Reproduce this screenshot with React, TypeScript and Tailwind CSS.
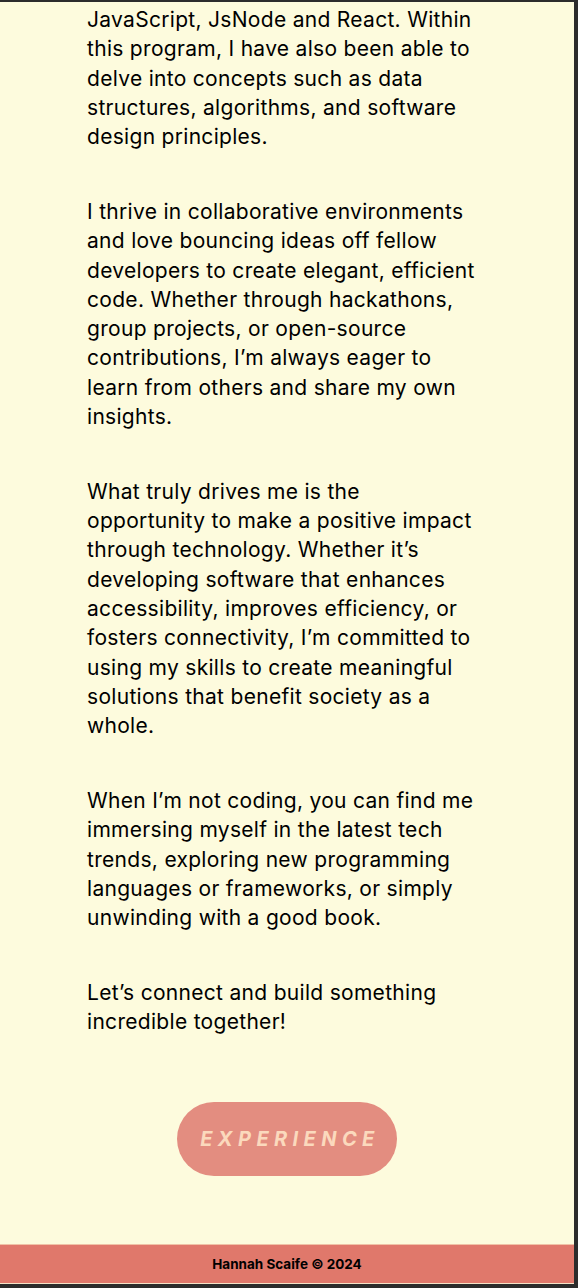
import React from "react";

const paras: string[][] = [
  [
    "JavaScript, JsNode and React. Within",
    "this program, I have also been able to",
    "delve into concepts such as data",
    "structures, algorithms, and software",
    "design principles.",
  ],
  [
    "I thrive in collaborative environments",
    "and love bouncing ideas off fellow",
    "developers to create elegant, efficient",
    "code. Whether through hackathons,",
    "group projects, or open-source",
    "contributions, I’m always eager to",
    "learn from others and share my own",
    "insights.",
  ],
  [
    "What truly drives me is the",
    "opportunity to make a positive impact",
    "through technology. Whether it’s",
    "developing software that enhances",
    "accessibility, improves efficiency, or",
    "fosters connectivity, I’m committed to",
    "using my skills to create meaningful",
    "solutions that benefit society as a",
    "whole.",
  ],
  [
    "When I’m not coding, you can find me",
    "immersing myself in the latest tech",
    "trends, exploring new programming",
    "languages or frameworks, or simply",
    "unwinding with a good book.",
  ],
  ["Let’s connect and build something", "incredible together!"],
];

export default function App() {
  return (
    <div className="w-[578px] h-[1288px] bg-[#2c2c2c] pt-[2px] pr-[4px] pb-[4px] overflow-hidden">
      <div
        className="h-full bg-[#fdfbdd] flex flex-col"
        style={{ fontFamily: "Inter, 'Liberation Sans', sans-serif" }}
      >
        <div className="pl-[87px] pt-[3px] flex flex-col gap-[45.5px] text-[21px] tracking-[0.3px] leading-[29.3px] text-black">
          {paras.map((p, i) => (
            <p key={i}>
              {p.map((l, j) => (
                <span key={j} className="block whitespace-nowrap">
                  {l}
                </span>
              ))}
            </p>
          ))}
        </div>
        <div className="flex justify-center mt-[65px]">
          <button className="w-[220px] h-[74px] rounded-full bg-[#e38d80] text-[#fbd9bd] text-[20px] font-bold italic tracking-[0.27em] pl-[6px]">
            EXPERIENCE
          </button>
        </div>
        <div className="flex-1" />
        <footer className="h-[40px] bg-[#e0786b] border-t border-t-[#f0c2a6] border-b border-b-[#f5e3c8] flex items-center justify-center text-[13.5px] font-bold text-black">
          Hannah Scaife © 2024
        </footer>
      </div>
    </div>
  );
}
